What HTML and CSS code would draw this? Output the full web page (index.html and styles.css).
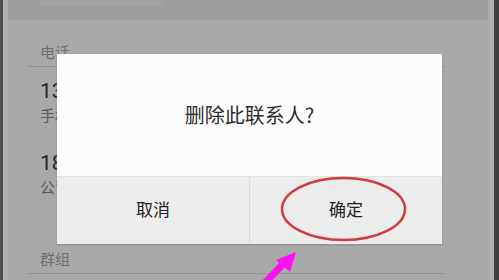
FILE: index.html
```html
<!DOCTYPE html>
<html lang="zh">
<head>
<meta charset="utf-8">
<link rel="stylesheet" href="styles.css">
</head>
<body>
<div class="screen">
  <div class="edge edge-left"></div>
  <div class="page">
    <div class="topbar"><div class="search"></div></div>
    <div class="list">
      <div class="label">电话</div>
      <div class="rule"></div>
      <div class="item">
        <div class="num">138 0000 0000</div>
        <div class="sub">手机</div>
      </div>
      <div class="item">
        <div class="num">186 0000 0000</div>
        <div class="sub">公司</div>
      </div>
      <div class="label label2">群组</div>
      <div class="rule"></div>
    </div>
  </div>
  <div class="edge edge-right"></div>

  <div class="dialog">
    <div class="dialog-body">删除此联系人?</div>
    <div class="dialog-actions">
      <div class="btn">取消</div>
      <div class="btn">确定</div>
    </div>
  </div>

  <svg class="mark" width="499" height="280" viewBox="0 0 499 280">
    <ellipse cx="343.5" cy="209" rx="61.5" ry="31" fill="none" stroke="#d03c3c" stroke-width="2.5"/>
    <path d="M262 286 L283 264" stroke="#ff10f0" stroke-width="7" stroke-linecap="round" fill="none"/>
    <polygon points="296,252 276,260 290,272" fill="#ff10f0"/>
  </svg>
</div>
</body>
</html>
```
FILE: styles.css
```css
* { box-sizing: border-box; }
html, body { margin: 0; padding: 0; }
body {
  width: 499px;
  height: 280px;
  overflow: hidden;
  font-family: "Noto Sans CJK SC", "Noto Sans", sans-serif;
}
.screen {
  position: relative;
  width: 499px;
  height: 280px;
  display: flex;
  background: #a9a9a9;
}
.edge-left {
  width: 8px;
  background: linear-gradient(to right, #4d4d4d 0 3px, #b1aeae 3px 8px);
}
.edge-right {
  width: 11px;
  background: linear-gradient(to right, #a9a9a9 0 2px, #b0b0b0 2px 6px, #3d3d3d 6px 11px);
}
.page {
  flex: 1;
  display: flex;
  flex-direction: column;
  overflow: hidden;
}
.topbar {
  height: 21px;
  background: #9e9e9e;
  border-bottom: 1px solid #a4a4a4;
  padding-left: 32px;
}
.search {
  width: 123px;
  height: 6px;
  background: #a3a3a3;
}
.list {
  display: flex;
  flex-direction: column;
  padding-top: 21px;
}
.label {
  padding-left: 32px;
  font-size: 15px;
  line-height: 20px;
  color: #6f6f6f;
  height: 24px;
}
.label2 { margin-top: 38px; }
.rule {
  margin-left: 19px;
  width: 418px;
  height: 1px;
  background: #939393;
}
.item {
  padding-left: 32px;
  display: flex;
  flex-direction: column;
  height: 72px;
  padding-top: 12px;
  white-space: nowrap;
}
.num {
  font-family: "Roboto", sans-serif;
  font-size: 21px;
  line-height: 24px;
  color: #262626;
}
.sub {
  font-size: 15px;
  line-height: 20px;
  margin-top: 2px;
  color: #5a5a5a;
}
.dialog {
  position: absolute;
  left: 57px;
  top: 54px;
  width: 385px;
  height: 190px;
  display: flex;
  flex-direction: column;
  box-shadow: 0 1px 2px rgba(0,0,0,0.2);
}
.dialog-body {
  height: 123px;
  background: #fcfcfc;
  border-bottom: 1px solid #e2e2e2;
  display: flex;
  align-items: center;
  justify-content: center;
  font-size: 20px;
  color: #2c2c2c;
  padding-bottom: 2px;
}
.dialog-actions {
  flex: 1;
  display: flex;
  background: #ececec;
}
.btn {
  flex: 1;
  display: flex;
  align-items: center;
  justify-content: center;
  font-size: 17px;
  color: #232323;
  padding-bottom: 4px;
}
.btn + .btn { border-left: 1px solid #dadada; }
.mark {
  position: absolute;
  left: 0;
  top: 0;
  pointer-events: none;
}
```
